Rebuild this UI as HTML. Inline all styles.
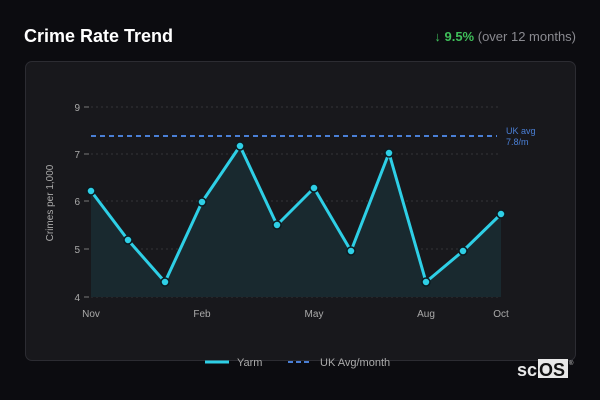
<!DOCTYPE html>
<html><head><meta charset="utf-8"><style>
body{margin:0;width:600px;height:400px;background:#0c0c10;font-family:"Liberation Sans",sans-serif;position:relative;overflow:hidden}
.t{position:absolute;left:24px;top:26px;color:#fff;font-weight:bold;font-size:18px}
.s{position:absolute;right:24px;top:29px;font-size:13px;color:#8a8a90}
.s b{color:#3fbf5a}
.card{position:absolute;left:25px;top:61px;width:549px;height:298px;background:#18181c;border:1px solid #2c2c32;border-radius:7px}
svg{position:absolute;left:0;top:0}
</style></head><body>
<div class="t">Crime Rate Trend</div>
<div class="s"><b>↓ 9.5%</b> (over 12 months)</div>
<div class="card"></div>
<svg width="600" height="400" font-family="Liberation Sans,sans-serif">
<g stroke="#333338" stroke-dasharray="2,3" stroke-width="1">
<line x1="91" y1="107" x2="501" y2="107"/><line x1="91" y1="154" x2="501" y2="154"/><line x1="91" y1="201" x2="501" y2="201"/><line x1="91" y1="249" x2="501" y2="249"/><line x1="91" y1="297" x2="501" y2="297"/>
</g>
<g fill="#aaa" font-size="10" text-anchor="end">
<text x="80" y="111">9</text><text x="80" y="158">7</text><text x="80" y="205">6</text><text x="80" y="253">5</text><text x="80" y="301">4</text>
</g>
<g stroke="#777"><line x1="84" y1="107" x2="89" y2="107"/><line x1="84" y1="154" x2="89" y2="154"/><line x1="84" y1="201" x2="89" y2="201"/><line x1="84" y1="249" x2="89" y2="249"/><line x1="84" y1="297" x2="89" y2="297"/></g>
<text transform="translate(53,203) rotate(-90)" fill="#aaa" font-size="10" text-anchor="middle">Crimes per 1,000</text>
<polygon fill="#19292f" points="91,297 91,191 128,240 165,282 202,202 240,146 277,225 314,188 351,251 389,153 426,282 463,251 501,214 501,297"/>
<line x1="91" y1="136" x2="497" y2="136" stroke="#4a7fd6" stroke-width="2" stroke-dasharray="5,4"/>
<text x="506" y="134" fill="#4a7fd6" font-size="9">UK avg</text><text x="506" y="145" fill="#4a7fd6" font-size="9">7.8/m</text>
<polyline fill="none" stroke="#2ecfe6" stroke-width="3" stroke-linejoin="round" points="91,191 128,240 165,282 202,202 240,146 277,225 314,188 351,251 389,153 426,282 463,251 501,214"/>
<g fill="#2ecfe6" stroke="#0c1a20" stroke-width="1.5">
<circle cx="91" cy="191" r="4"/><circle cx="128" cy="240" r="4"/><circle cx="165" cy="282" r="4"/><circle cx="202" cy="202" r="4"/><circle cx="240" cy="146" r="4"/><circle cx="277" cy="225" r="4"/><circle cx="314" cy="188" r="4"/><circle cx="351" cy="251" r="4"/><circle cx="389" cy="153" r="4"/><circle cx="426" cy="282" r="4"/><circle cx="463" cy="251" r="4"/><circle cx="501" cy="214" r="4"/>
</g>
<g fill="#aaa" font-size="10" text-anchor="middle">
<text x="91" y="317">Nov</text><text x="202" y="317">Feb</text><text x="314" y="317">May</text><text x="426" y="317">Aug</text><text x="501" y="317">Oct</text>
</g>
<line x1="205" y1="362" x2="229" y2="362" stroke="#2ecfe6" stroke-width="3"/>
<text x="237" y="366" fill="#aaa" font-size="11">Yarm</text>
<line x1="288" y1="362" x2="312" y2="362" stroke="#4a7fd6" stroke-width="2" stroke-dasharray="5,3"/>
<text x="320" y="366" fill="#aaa" font-size="11">UK Avg/month</text>
<rect x="538" y="359" width="30" height="19" fill="#e8e8e8"/>
<text x="517" y="376" fill="#e8e8e8" font-size="18" font-weight="bold">sc</text>
<text x="539" y="376" fill="#111" font-size="18" font-weight="bold">OS</text>
<text x="569" y="365" fill="#ccc" font-size="6">®</text>
</svg>
</body></html>
